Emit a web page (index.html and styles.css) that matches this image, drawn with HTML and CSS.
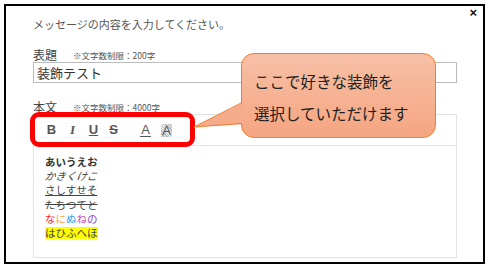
FILE: index.html
```html
<!DOCTYPE html>
<html lang="ja">
<head>
    <meta charset="UTF-8">
    <title>メッセージ入力</title>
    <link rel="stylesheet" href="styles.css">
</head>
<body>
    <div class="dialog">
        <span class="close">×</span>
        <p class="message">メッセージの内容を入力してください。</p>

        <div class="field-label">
            <span class="label">表題</span><span class="limit">※文字数制限：200字</span>
        </div>
        <div class="title-input">装飾テスト</div>

        <div class="field-label">
            <span class="label">本文</span><span class="limit">※文字数制限：4000字</span>
        </div>
        <div class="editor">
            <div class="toolbar">
                <span class="tool tool-b">B</span>
                <span class="tool tool-i">I</span>
                <span class="tool tool-u">U</span>
                <span class="tool tool-s">S</span>
                <span class="tool tool-color">A</span>
                <span class="tool tool-bg">A</span>
            </div>
            <div class="content">
                <div class="bold">あいうえお</div>
                <div class="italic">かきくけこ</div>
                <div class="under">さしすせそ</div>
                <div class="strike">たちつてと</div>
                <div><span class="c-red">な</span><span class="c-orange">に</span><span class="c-blue">ぬ</span><span class="c-violet">ね</span><span class="c-purple">の</span></div>
                <div><span class="mark">はひふへほ</span></div>
            </div>
        </div>

        <!-- annotation -->
        <div class="ring"></div>
        <div class="bubble">ここで好きな装飾を<br>選択していただけます</div>
        <svg class="tail" width="52" height="32" viewBox="0 0 52 32">
            <polygon points="52,4 2,29 52,26" fill="#f6ab8b"/>
            <polyline points="50,4.5 2,29 50,25.5" fill="none" stroke="#ed7d31" stroke-width="1"/>
        </svg>
    </div>
</body>
</html>
```

FILE: styles.css
```css
* { box-sizing: border-box; }
body {
    margin: 0;
    background: #fff;
    font-family: "Noto Sans CJK JP", "Liberation Sans", sans-serif;
    color: #444;
}
.dialog {
    position: relative;
    margin: 4px;
    width: 481px;
    height: 260px;
    border: 2px solid #000;
    padding: 10px 21px 0 27px;
}
.close {
    position: absolute;
    top: 0;
    right: 6px;
    font-family: "Liberation Sans", sans-serif;
    font-weight: bold;
    font-size: 13px;
    line-height: 13px;
    color: #111;
}
.message {
    margin: 0;
    font-size: 11px;
    line-height: 16px;
    color: #555;
}
.field-label {
    margin-top: 12px;
    height: 18px;
    line-height: 18px;
}
.label {
    font-size: 12px;
    color: #444;
}
.limit {
    font-size: 8.5px;
    margin-left: 16px;
    color: #555;
    vertical-align: 1px;
}
.title-input {
    width: 424px;
    height: 21px;
    border: 1px solid #bbb;
    padding: 0 3px;
    font-size: 13px;
    line-height: 19px;
    color: #333;
}
.title-input + .field-label { margin-top: 13px; }
.editor {
    width: 424px;
    height: 144px;
    border: 1px solid #e3e3e3;
}
.toolbar {
    height: 31px;
    border-bottom: 1px solid #e3e3e3;
    display: flex;
    align-items: center;
    padding-left: 12px;
    font-family: "Liberation Sans", sans-serif;
    font-size: 13px;
    color: #555;
}
.tool {
    display: inline-block;
    width: 11px;
    text-align: center;
    line-height: 14px;
    font-weight: bold;
}
.tool + .tool { margin-left: 10px; }
.tool-i {
    font-family: "Liberation Serif", serif;
    font-style: italic;
}
.tool-u { text-decoration: underline; }
.tool.tool-s { margin-left: 9px; }
.tool-s { text-decoration: line-through; }
.tool.tool-color {
    margin-left: 21px;
    font-weight: normal;
    border-bottom: 1px solid #555;
    line-height: 12px;
}
.tool-bg {
    font-weight: normal;
    background: repeating-linear-gradient(45deg, #bbb 0 1px, #eee 1px 2px);
    line-height: 13px;
}
.content {
    padding: 9px 11px;
    font-size: 10.5px;
    line-height: 14.2px;
    color: #444;
}
.bold { font-weight: bold; color: #333; }
.italic { font-style: italic; transform: skewX(-10deg); transform-origin: left; }
.under { text-decoration: underline; }
.strike { text-decoration: line-through; }
.c-red { color: #ff2020; }
.c-orange { color: #ff9933; }
.c-blue { color: #3399ee; }
.c-violet { color: #cc55aa; }
.c-purple { color: #8844cc; }
.mark { background: #ffff00; color: #444; line-height: 12px; display: inline-block; }

.ring {
    position: absolute;
    left: 24px;
    top: 106px;
    width: 165px;
    height: 35px;
    border: 5px solid #ff0000;
    border-radius: 9px;
}
.bubble {
    position: absolute;
    left: 235px;
    top: 47px;
    width: 195px;
    height: 85px;
    border: 1px solid #ed7d31;
    border-radius: 13px;
    background: linear-gradient(#f7c0a6, #f5a581);
    padding: 11px 0 0 12px;
    font-size: 15.5px;
    line-height: 32px;
    color: #222;
}
.tail {
    position: absolute;
    left: 186px;
    top: 92px;
}
```
